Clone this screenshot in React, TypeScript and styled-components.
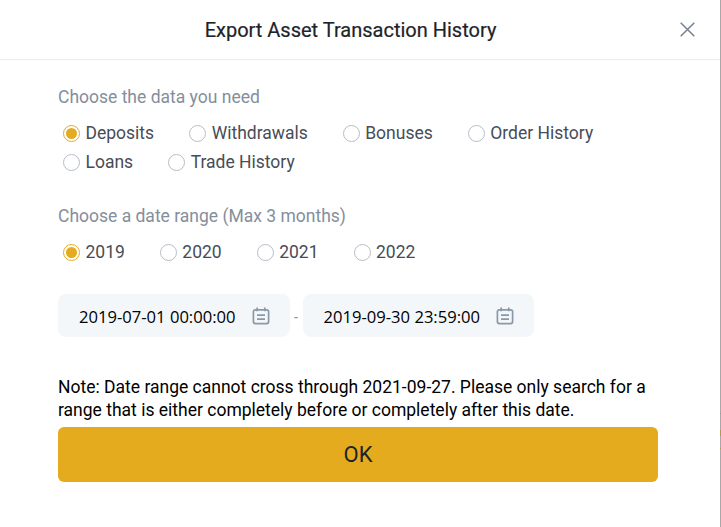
import React from 'react';
import styled, { createGlobalStyle } from 'styled-components';

const Global = createGlobalStyle`
    html, body {
        margin: 0;
        padding: 0;
        background: #fff;
    }
`;

const Page = styled.div`
    display: flex;
    width: 721px;
    height: 527px;
`;

const Modal = styled.div`
    width: 720px;
    background: #fff;
    font-family: Roboto, sans-serif;
    color: #474d57;
    display: flex;
    flex-direction: column;
`;

// the page behind the modal only shows as this 1px sliver
const BackdropEdge = styled.div`
    width: 1px;
    background: linear-gradient(
        to bottom,
        #a8a8a8 413px,
        #b09a50 413px,
        #b09a50 414px,
        #a8a8a8 414px,
        #a8a8a8 430px,
        #b09a50 430px,
        #b09a50 436px,
        #a8a8a8 436px,
        #a8a8a8 448px,
        #b09a50 448px,
        #b09a50 449px,
        #a8a8a8 449px
    );
`;

const Header = styled.header`
    height: 59px;
    flex-shrink: 0;
    padding-right: 19px;
    border-bottom: 1px solid #eaecef;
    display: flex;
    align-items: center;
    justify-content: center;
    position: relative;
`;

const Title = styled.h2`
    margin: 0;
    font-size: 20px;
    font-weight: 400;
    color: #1e2329;
    -webkit-text-stroke: 0.2px #1e2329;
`;

const CloseButton = styled.button`
    position: absolute;
    top: 22px;
    right: 25px;
    width: 15px;
    height: 15px;
    padding: 0;
    border: 0;
    background: none;
    color: #76808f;
    display: flex;
`;

const Body = styled.div`
    padding: 25px 62px 0 58px;
    display: flex;
    flex-direction: column;
`;

const Label = styled.div<{ $spaced?: boolean }>`
    margin-top: ${(p) => (p.$spaced ? '30px' : '0')};
    font-size: 17.5px;
    line-height: 24px;
    color: #848e9c;
`;

const RadioRows = styled.div`
    margin-top: 12px;
    display: flex;
    flex-wrap: wrap;
    row-gap: 5px;
    column-gap: 35px;
    padding-left: 5px;
`;

const RadioItem = styled.label`
    display: flex;
    align-items: center;
    gap: 5.5px;
    height: 24px;
    font-size: 17.5px;
`;

const RadioDot = styled.span<{ $checked?: boolean }>`
    box-sizing: border-box;
    width: 17px;
    height: 17px;
    border-radius: 50%;
    border: 1px solid ${(p) => (p.$checked ? '#e5ab1f' : '#b7bdc6')};
    display: flex;
    align-items: center;
    justify-content: center;
    &::after {
        content: '';
        width: 11px;
        height: 11px;
        border-radius: 50%;
        background: ${(p) => (p.$checked ? '#e5ab1f' : 'transparent')};
    }
`;

const DateRow = styled.div`
    margin-top: 30px;
    display: flex;
    align-items: center;
`;

const DateField = styled.div`
    box-sizing: border-box;
    width: 231.5px;
    height: 43px;
    border-radius: 8px;
    background: #f4f7f9;
    padding: 0 20px 0 21px;
    display: flex;
    align-items: center;
    justify-content: space-between;
`;

const DateText = styled.span`
    padding-top: 2px;
    font-family: 'Open Sans', sans-serif;
    font-size: 16.6px;
    color: #000;
`;

const Dash = styled.span`
    width: 13px;
    padding-top: 2px;
    text-align: center;
    color: #848e9c;
    font-size: 14px;
`;

const Note = styled.p`
    margin: 39px 0 0;
    font-size: 17.5px;
    line-height: 23px;
    color: #000;
`;

const OkButton = styled.button`
    margin-top: 5px;
    width: 600px;
    height: 55px;
    border: 0;
    border-radius: 6px;
    background: #e5ab1f;
    color: #1e2329;
    font-family: Roboto, sans-serif;
    font-size: 22px;
`;

const CalendarIcon = () => (
    <svg width="18" height="18" viewBox="0 0 18 18" fill="none" stroke="#8a98aa" strokeWidth="1.7">
        <rect x="1.4" y="2.8" width="15.2" height="13.8" rx="2" />
        <path d="M5.2 0.6v3.6M12.8 0.6v3.6M5 8.2h8M5 12.2h8" />
    </svg>
);

const Radio = ({ label, checked }: { label: string; checked?: boolean }) => (
    <RadioItem>
        <RadioDot $checked={checked} />
        {label}
    </RadioItem>
);

export default function App() {
    return (
        <Page>
            <Global />
            <Modal>
                <Header>
                    <Title>Export Asset Transaction History</Title>
                    <CloseButton>
                        <svg width="15" height="15" viewBox="0 0 15 15" fill="none" stroke="currentColor" strokeWidth="1.5">
                            <path d="M0.7 0.7l13.6 13.6M14.3 0.7L0.7 14.3" />
                        </svg>
                    </CloseButton>
                </Header>
                <Body>
                    <Label>Choose the data you need</Label>
                    <RadioRows>
                        <Radio label="Deposits" checked />
                        <Radio label="Withdrawals" />
                        <Radio label="Bonuses" />
                        <Radio label="Order History" />
                        <Radio label="Loans" />
                        <Radio label="Trade History" />
                    </RadioRows>
                    <Label $spaced>Choose a date range (Max 3 months)</Label>
                    <RadioRows>
                        <Radio label="2019" checked />
                        <Radio label="2020" />
                        <Radio label="2021" />
                        <Radio label="2022" />
                    </RadioRows>
                    <DateRow>
                        <DateField>
                            <DateText>2019-07-01 00:00:00</DateText>
                            <CalendarIcon />
                        </DateField>
                        <Dash>-</Dash>
                        <DateField>
                            <DateText>2019-09-30 23:59:00</DateText>
                            <CalendarIcon />
                        </DateField>
                    </DateRow>
                    <Note>
                        Note: Date range cannot cross through 2021-09-27. Please only search for a range that is either
                        completely before or completely after this date.
                    </Note>
                    <OkButton>OK</OkButton>
                </Body>
            </Modal>
            <BackdropEdge />
        </Page>
    );
}
